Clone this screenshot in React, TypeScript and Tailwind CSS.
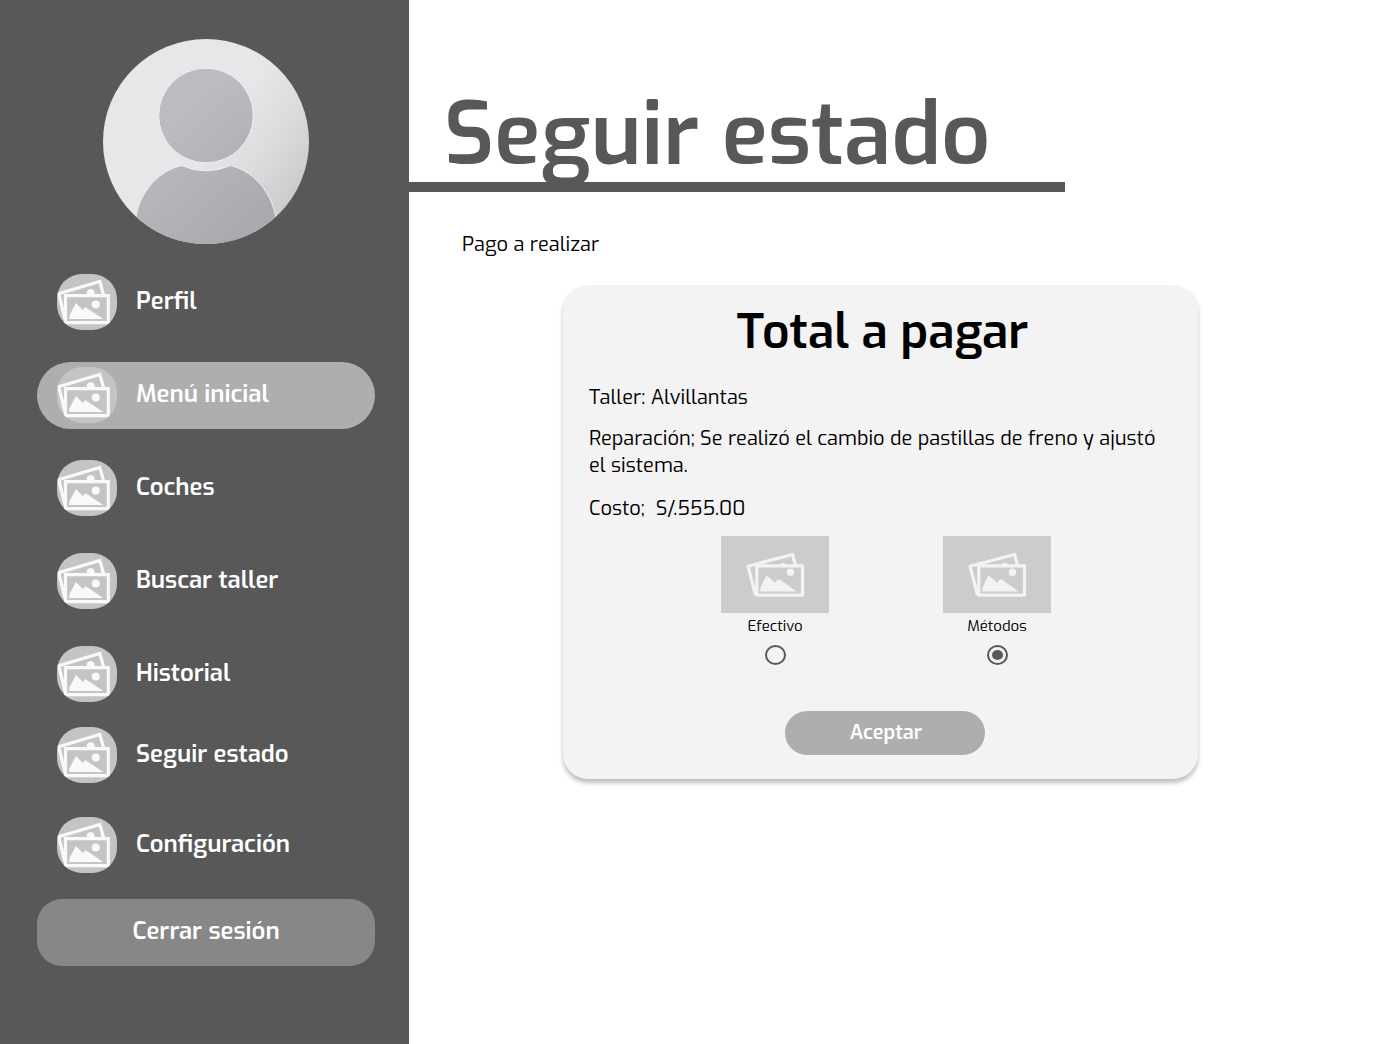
import { useState } from 'react';

function NavPicture() {
  return (
    <svg viewBox="0 0 60 56" className="h-14 w-[60px] shrink-0 rounded-[25px] bg-[#c4c4c4]" aria-hidden="true">
      <g fill="none" stroke="#f9f9f8" strokeWidth="3.2">
        <path d="M8 45 L1.7 19.6 L42.8 7.4 L46.6 21" />
        <path d="M8.5 21.6 H51.3 V48.6 H8.5 Z" strokeWidth="3.2" />
      </g>
      <path d="M29.8 20 a4 4 0 1 1 7.8 0 Z" fill="#f9f9f8" />
      <path d="M12.3 45 V41.5 L19 29 L25.7 36 L28.3 33 L46.3 45 Z" fill="#f9f9f8" />
      <circle cx="38.7" cy="30.4" r="4" fill="#f9f9f8" />
    </svg>
  );
}

function MethodPicture() {
  return (
    <svg viewBox="0 0 108 77" className="h-[77px] w-[108px] bg-[#cccccc]" aria-hidden="true">
      <g fill="none" stroke="#f3f3f3" strokeWidth="3.2" strokeLinejoin="round">
        <path d="M34.5 59 L27 30.2 L71.5 18.5 L74.7 30" />
        <path d="M35.8 29.8 H81.5 V59.2 H35.8 Z" />
      </g>
      <path d="M58.5 29 a3.4 3.4 0 0 1 6.4 0 Z" fill="#f3f3f3" />
      <path d="M39.3 55.6 V52 L44.5 41 Q45.5 39 47 40.6 L54 46.8 L56.6 43.7 Q57.7 42.6 59.2 43.7 L75.7 55.6 Z" fill="#f3f3f3" />
      <circle cx="69.4" cy="36.3" r="3.7" fill="#f3f3f3" />
    </svg>
  );
}

function Avatar() {
  return (
    <svg viewBox="0 0 206 205" className="h-[205px] w-[206px] self-center" role="img" aria-label="Foto de perfil">
      <defs>
        <linearGradient id="back" x1="0.2" y1="0.2" x2="1" y2="0.75">
          <stop offset="0.45" stopColor="#e6e7e8" />
          <stop offset="0.7" stopColor="#dbdcde" />
          <stop offset="1" stopColor="#c7c8ca" />
        </linearGradient>
        <linearGradient id="figure" gradientUnits="userSpaceOnUse" x1="50" y1="50" x2="170" y2="190">
          <stop offset="0.2" stopColor="#bbbcbf" />
          <stop offset="1" stopColor="#a7a8ab" />
        </linearGradient>
        <clipPath id="round">
          <ellipse cx="103" cy="102.5" rx="103" ry="102.5" />
        </clipPath>
      </defs>
      <g clipPath="url(#round)">
        <rect width="206" height="205" fill="url(#back)" />
        <g fill="url(#figure)" stroke="#eeeff0" strokeWidth="1">
          <circle cx="103" cy="76.5" r="47.3" />
          <path d="M32 215 V187 C33 158 52 133 78.5 126.5 Q103 137 127.5 126.5 C154 133 172 158 174 187 V215 Z" />
        </g>
      </g>
    </svg>
  );
}

const links = [
  { label: 'Perfil', style: 'mt-[30px] h-14' },
  { label: 'Menú inicial', style: 'mt-8 h-[67px] rounded-full bg-[#aeaeae] pb-px' },
  { label: 'Coches', style: 'mt-[31px] h-14' },
  { label: 'Buscar taller', style: 'mt-[37px] h-14' },
  { label: 'Historial', style: 'mt-[37px] h-14' },
  { label: 'Seguir estado', style: 'mt-[25px] h-14' },
  { label: 'Configuración', style: 'mt-[34px] h-14' },
];

const methods = ['Efectivo', 'Métodos'];

export default function App() {
  const [method, setMethod] = useState('Métodos');

  return (
    <div className="flex min-h-screen bg-white font-[Exo,'Exo_2',Roboto,sans-serif] text-black">
      <aside className="flex w-[409px] shrink-0 flex-col bg-[#585858] pt-[39px] pr-[34px] pb-10 pl-[37px] text-2xl font-semibold text-white">
        <Avatar />
        <nav className="flex flex-col">
          {links.map(({ label, style }) => (
            <a key={label} href="#" className={`flex items-center gap-[19px] pl-5 ${style}`}>
              <NavPicture />
              <span className="pb-[3px]">{label}</span>
            </a>
          ))}
        </nav>
        <button type="button" className="mt-[26px] h-[67px] rounded-[25px] bg-[#878787] pb-1">
          Cerrar sesión
        </button>
      </aside>

      <main className="min-w-0 flex-1 pt-[82px]">
        <h1 className="h-[110px] w-[656px] max-w-full border-b-10 border-[#585858] pl-[35px] text-[86px] leading-[107px] font-semibold whitespace-nowrap text-[#585858]">
          Seguir estado
        </h1>
        <p className="mt-[39px] pl-[53px] text-xl leading-7">Pago a realizar</p>

        <section className="mt-[26px] mr-[181px] ml-[154px] flex flex-col rounded-[25px] bg-[#f3f3f3] px-[26px] pt-[17px] pb-6 shadow-[0_4px_4px_rgba(0,0,0,0.25)]">
          <h2 className="pl-1 text-center text-5xl leading-[60px] font-semibold">Total a pagar</h2>
          <p className="mt-[22px] text-xl leading-7">Taller: Alvillantas</p>
          <p className="mt-[13px] pr-3 text-xl leading-[27px]">
            Reparación; Se realizó el cambio de pastillas de freno y ajustó el sistema.
          </p>
          <p className="mt-4 text-xl leading-7 whitespace-pre">Costo;  S/.555.00</p>
          <div role="radiogroup" aria-label="Método de pago" className="mt-[13px] ml-[11px] flex justify-center gap-[114px]">
            {methods.map((name) => (
              <label key={name} className="flex flex-col items-center text-[15px] leading-6">
                <MethodPicture />
                <span className="mt-px">{name}</span>
                <input
                  type="radio"
                  name="metodo"
                  checked={method === name}
                  onChange={() => setMethod(name)}
                  className="mt-[7px] grid h-5 w-[21px] appearance-none place-items-center rounded-[50%] border-2 border-[#585858] before:h-[10px] before:w-[11px] before:rounded-[50%] checked:before:bg-[#585858]"
                />
              </label>
            ))}
          </div>
          <button type="button" className="mt-[46px] ml-[9px] h-11 w-[200px] self-center rounded-full bg-[#aeaeae] pl-0.5 text-xl font-semibold text-white">
            Aceptar
          </button>
        </section>
      </main>
    </div>
  );
}
